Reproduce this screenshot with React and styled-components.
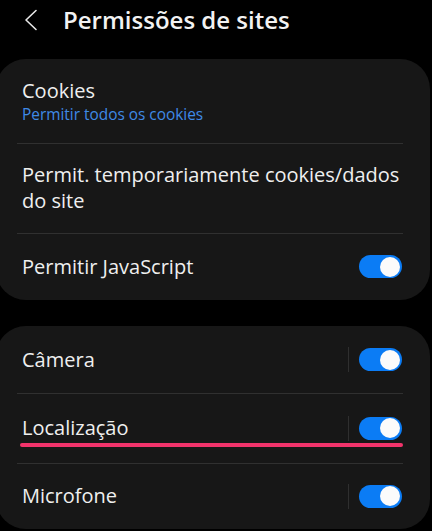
import React from "react";
import styled, { createGlobalStyle } from "styled-components";

const GlobalStyle = createGlobalStyle`
  html, body {
    margin: 0;
    padding: 0;
    background: #000;
  }
  body {
    font-family: "Open Sans", Roboto, sans-serif;
    color: #efefef;
    -webkit-font-smoothing: antialiased;
  }
`;

const Screen = styled.div`
  width: 432px;
  height: 531px;
  overflow: hidden;
  background: #000;
`;

const Header = styled.div`
  height: 59px;
  display: flex;
  align-items: flex-start;
  padding: 6px 0 0 22px;
  box-sizing: border-box;
  gap: 23px;
`;

const BackButton = styled.svg`
  width: 18px;
  height: 22px;
  margin-top: 3px;
  flex-shrink: 0;
`;

const Title = styled.h1`
  margin: 0;
  font-size: 24px;
  font-weight: 600;
  line-height: 28px;
  color: #f2f2f2;
`;

const Card = styled.div`
  margin-left: -4px;
  width: 434px;
  background: #171717;
  border-radius: 30px;
  margin-bottom: ${(p) => p.$gap || 0}px;
`;

const Row = styled.div`
  position: relative;
  height: ${(p) => p.$h}px;
  display: flex;
  align-items: center;
  padding: 0 28px 0 26px;
  box-sizing: border-box;

  &::before {
    content: "";
    display: ${(p) => (p.$divider ? "block" : "none")};
    position: absolute;
    top: 0;
    left: 21px;
    right: 27px;
    height: 1px;
    background: #303030;
  }
`;

const TextBlock = styled.div`
  flex: 1;
  display: flex;
  flex-direction: column;
`;

const Label = styled.div`
  font-size: 20px;
  line-height: 26px;
  color: #efefef;
`;

const Sub = styled.div`
  font-size: 15.4px;
  line-height: 20px;
  color: #3f8ae6;
  margin-top: 1px;
`;

const VSep = styled.div`
  width: 1px;
  height: 25px;
  background: #2f2f2f;
  margin-right: 10px;
`;

const Toggle = styled.div`
  width: 43px;
  height: 23px;
  border-radius: 12px;
  background: #0b7cf5;
  display: flex;
  align-items: center;
  justify-content: flex-end;
  padding-right: 2px;
  box-sizing: border-box;
  flex-shrink: 0;
`;

const Thumb = styled.div`
  width: 20px;
  height: 20px;
  border-radius: 50%;
  background: #fbfbfb;
`;

const Highlight = styled.div`
  position: absolute;
  left: 24px;
  right: 27px;
  bottom: 16px;
  height: 4px;
  border-radius: 2px;
  background: #f2336b;
`;

const Switch = () => (
  <Toggle>
    <Thumb />
  </Toggle>
);

export default function App() {
  return (
    <Screen>
      <GlobalStyle />
      <Header>
        <BackButton viewBox="0 0 18 22">
          <path
            d="M14 1.5 L4 11 L14 20.5"
            fill="none"
            stroke="#e8e8e8"
            strokeWidth="1.6"
            strokeLinecap="round"
            strokeLinejoin="round"
          />
        </BackButton>
        <Title>Permissões de sites</Title>
      </Header>

      <Card $gap={26}>
        <Row $h={84}>
          <TextBlock>
            <Label>Cookies</Label>
            <Sub>Permitir todos os cookies</Sub>
          </TextBlock>
        </Row>
        <Row $h={90} $divider>
          <TextBlock>
            <Label>Permit. temporariamente cookies/dados do site</Label>
          </TextBlock>
        </Row>
        <Row $h={67} $divider>
          <TextBlock>
            <Label>Permitir JavaScript</Label>
          </TextBlock>
          <Switch />
        </Row>
      </Card>

      <Card>
        <Row $h={67}>
          <TextBlock>
            <Label>Câmera</Label>
          </TextBlock>
          <VSep />
          <Switch />
        </Row>
        <Row $h={70} $divider>
          <TextBlock>
            <Label>Localização</Label>
          </TextBlock>
          <VSep />
          <Switch />
          <Highlight />
        </Row>
        <Row $h={66} $divider>
          <TextBlock>
            <Label>Microfone</Label>
          </TextBlock>
          <VSep />
          <Switch />
        </Row>
      </Card>
    </Screen>
  );
}
